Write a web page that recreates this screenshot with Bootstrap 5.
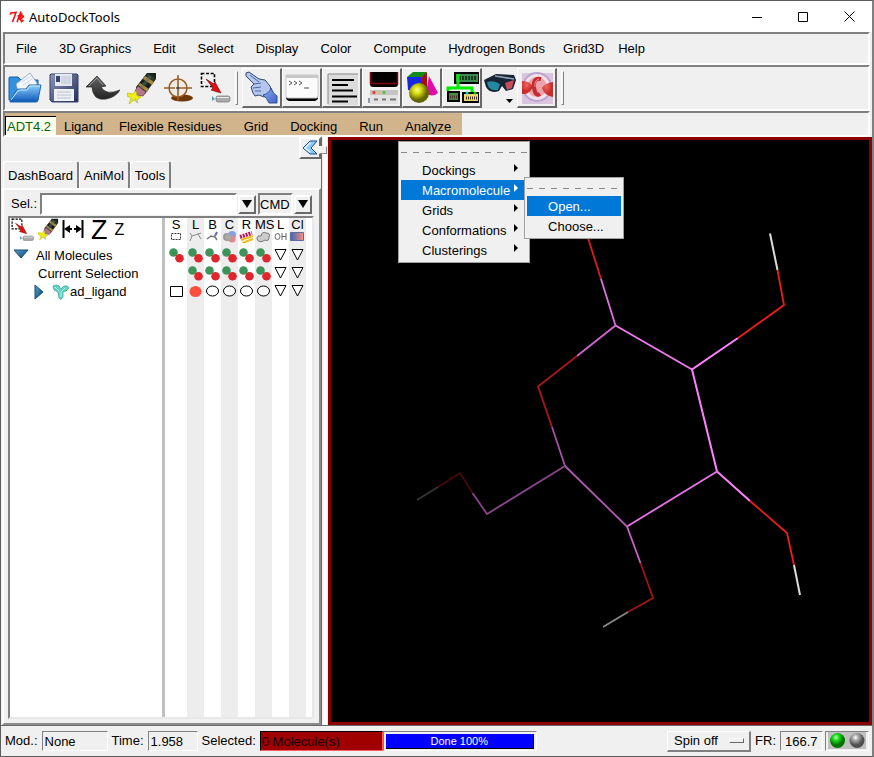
<!DOCTYPE html>
<html lang="en">
<head>
<meta charset="utf-8">
<meta name="viewport" content="width=device-width, initial-scale=1">
<title>AutoDockTools</title>
<link rel="stylesheet" href="https://cdn.jsdelivr.net/npm/bootstrap@5.3.0/dist/css/bootstrap.min.css">
<style>
  body { font: 13px/16px "Liberation Sans", Arial, sans-serif; color: #000; background: #f0f0f0; }
  button, input, select { font: inherit; color: inherit; }
  button { background: none; border: 0; padding: 0; }
  svg { display: block; flex: none; }
  .app { border: 1px solid #5c5c5c; border-right: 2px solid #808080; overflow: hidden; }
  .titlebar { height: 31px; background: #fff; padding-left: 8px; }
  .titlebar h1 { font: 13px/16px "Noto Sans", "Open Sans", sans-serif; }
  .titlebar button { width: 46px; height: 30px; display: flex; align-items: center; justify-content: center; }
  .strip { border: 2px solid; border-color: #808080 #fff #fff #808080; margin: 0 2px; }
  .menubar { height: 33px; }
  .menubar button { padding: 0 11px; white-space: nowrap; }
  .menubar .tight { padding: 0 7px; }
  .toolbar { height: 46px; }
  .toolbar button { display: flex; align-items: center; justify-content: center; width: 39px; height: 40px; }
  .toolbar .narrow { width: 35px; }
  .raised { border: 2px solid; border-color: #fff #696969 #696969 #fff; background: #f0f0f0; }
  .toolbar .raised { width: 40px; border-width: 1px 2px 2px 1px; }
  .grip { width: 3px; height: 34px; border: 1px solid; border-color: #fff #808080 #808080 #fff; }
  .modes { height: 26px; }
  .tanbar { background: #d2b48c; }
  .tanbar button { padding: 6px 11px 0; height: 22px; white-space: nowrap; }
  .tanbar .mode-now { padding: 2px 1px 0; width: 51px; height: 19px; margin: 3px 0 0; text-align: left; background: #fffff0; color: #006400; border-top: 1px solid #000; border-left: 1px solid #000; }
  .popmenu { position: absolute; z-index: 5; background: #f0f0f0; border: 1px solid #a0a0a0; padding: 2px; }
  .popmenu hr { margin: 8px 0 7px; opacity: 1; border: 0; height: 1px; background: repeating-linear-gradient(90deg, #888 0 6px, transparent 6px 12px); }
  .popmenu button { display: flex; justify-content: space-between; width: 100%; height: 20px; align-items: center; padding: 1px 9px 0 21px; }
  .popmenu button svg { margin-bottom: 6px; }
  .popmenu .hot { background: #0078d7; color: #fff; }
  .menu-main { width: 132px; left: 4px; top: 28px; }
  .menu-sub { width: 100px; left: 125px; top: 35px; }
  .lower { min-height: 0; }
  .side { width: 327px; flex: none; background: linear-gradient(90deg, transparent 320px, #696969 320px 321px, #f0f0f0 321px 322px, #fff 322px 326px, #f0f0f0 326px); }
  .side-top { height: 24px; padding-right: 2px; }
  .side-inner { margin-right: 7px; }
  .collapse-btn { width: 22px; height: 22px; margin-right: 5px; }
  .sash { position: absolute; right: 1px; top: 9px; width: 8px; height: 8px; background: #f0f0f0; border: 1px solid; border-color: #fff #888 #888 #fff; }
  .pagetabs { padding-left: 2px; }
  .pagetabs button { height: 27px; padding: 2px 4px 0; border: 1px solid #fff; border-right: 2px solid #808080; border-bottom: 0; border-radius: 3px 3px 0 0; }
  .page { border: 2px solid; border-color: #fff #8c8c8c #8c8c8c #fff; padding: 3px 5px 4px 4px; margin-left: 1px; }
  .sunk { border: 2px solid; border-color: #808080 #fff #fff #808080; background: #fff; border-radius: 0; padding: 0 2px; min-width: 0; }
  .selrow { height: 22px; margin-bottom: 1px; }
  .selrow label { padding: 0 3px; }
  .selrow input { height: 22px; }
  .selrow .cmdbox { width: 35px; background: #f0f0f0; padding: 0; }
  .arrowbtn { width: 18px; height: 19px; display: flex; align-items: center; justify-content: center; margin: 0 2px 0 1px; flex: none; }
  .tree { border: 2px solid; border-color: #808080 #e8e8e8 #e8e8e8 #808080; background: #fff; }
  .treecol { border-right: 3px solid #c0c0c0; min-width: 0; }
  .treehead { height: 29px; padding-left: 1px; align-items: flex-start; }
  .bigz { font-size: 27px; line-height: 24px; }
  .smallz { font-size: 16px; line-height: 24px; }
  .treerow { height: 18px; white-space: nowrap; }
  .flags { width: 147px; flex: none; background: repeating-linear-gradient(90deg, #ededed 0 17px, #fff 17px 34px) 22px 0 / 119px 100% no-repeat; }
  .flags table { table-layout: fixed; width: 141px; border-collapse: collapse; }
  .flags th, .flags td { padding: 0; text-align: center; font-weight: 400; height: 18px; vertical-align: middle; }
  .flags th { height: 28px; line-height: 13px; vertical-align: top; white-space: nowrap; }
  .flags th div { display: flex; justify-content: center; height: 13px; }
  .flags svg { margin: 0 auto; }
  .c-first { width: 22px; }
  .viewer { border: 3px solid #8b0000; background: #000; min-width: 0; }
  .status { height: 31px; border-top: 1px solid #696969; padding: 1px 3px 1px 4px; white-space: nowrap; }
  .status .sunk { background: #f0f0f0; height: 20px; border-width: 1px; padding: 0 2px; }
  .status .f-mod { width: 66px; } .status .f-time { width: 50px; } .status .f-fr { width: 43px; }
  .status .f-sel { width: 123px; background: #a00000; border-color: #000 #ff6060 #ff6060 #000; color: #100; padding: 0 1px; }
  .status .donebar { width: 154px; padding: 2px; }
  .donefill { background: #00f; color: #fff; font-size: 11px; line-height: 14px; height: 15px; border-right: 1px solid #000; border-bottom: 1px solid #000; }
  .spin { height: 21px; width: 84px; border-width: 1px 2px 2px 1px; padding-left: 6px; border-color: #fff #808080 #808080 #fff; }
  .spin select { appearance: none; border: 0; background: none; width: 55px; padding: 0; outline: 0; }
  .spinmark { width: 15px; height: 5px; border: 1px solid; border-color: #fff #696969 #696969 #fff; }
  .leds { background: #c0c0c0; }
  .ledbox { margin-left: 2px; }
  .g-small { gap: 3px; }
  .g-status { gap: 4px; }
</style>
</head>
<body>
<svg width="0" height="0" class="position-absolute" aria-hidden="true">
  <defs>
    <linearGradient id="blueFace" x2="0" y2="1"><stop stop-color="#8fd0fb"/><stop offset="1" stop-color="#0a56ba"/></linearGradient>
    <linearGradient id="steel" x2="1" y2="1"><stop stop-color="#8d98bb"/><stop offset="1" stop-color="#242c54"/></linearGradient>
    <linearGradient id="dark" x2="0" y2="1"><stop stop-color="#666"/><stop offset="1" stop-color="#222"/></linearGradient>
    <linearGradient id="triFill" x2="1" y2="1"><stop stop-color="#4fa0cc"/><stop offset="1" stop-color="#124670"/></linearGradient>
    <linearGradient id="cl" x2="1"><stop stop-color="#3569bd"/><stop offset="1" stop-color="#ff8d77"/></linearGradient>
    <linearGradient id="cuff" x2="1" y2="1"><stop stop-color="#8fb0f8"/><stop offset="1" stop-color="#3c62c4"/></linearGradient>
    <radialGradient id="yel" cx=".4" cy=".35"><stop stop-color="#ffff80"/><stop offset=".4" stop-color="#d8dc10"/><stop offset="1" stop-color="#626600"/></radialGradient>
    <radialGradient id="ledg" cx=".4" cy=".3"><stop stop-color="#b8ffb0"/><stop offset=".4" stop-color="#20e020"/><stop offset="1" stop-color="#007000"/></radialGradient>
    <radialGradient id="ledx" cx=".4" cy=".3"><stop stop-color="#fff"/><stop offset=".4" stop-color="#aaa"/><stop offset="1" stop-color="#505050"/></radialGradient>
    <radialGradient id="redb" cx=".4" cy=".3"><stop stop-color="#f0685e"/><stop offset="1" stop-color="#c92a2c"/></radialGradient>
  </defs>
  <symbol id="pencil" viewBox="0 0 30 32">
    <path d="M20 1h9v6L18 22l-8-3-1-4z" fill="#18201c"/>
    <path d="M20 1l9 5-4 6-8-5z" fill="#29362d"/><path d="M18 4l9 6-2 3-9-6zM13 11l9 6-2 3-9-7z" fill="#a98a3e"/>
    <path d="M22 3l3 2-11 14-3-2z" fill="#587064" opacity=".5"/>
    <path d="M11 14l8 6-3 4-6-1-2-4z" fill="#b4788a" stroke="#613943" stroke-width=".7"/>
    <path d="M0 21l6 1 3-3 1 5 4 1-4 3 1 3-4-3-5 4 2-6-4-2z" fill="#eeee10" stroke="#c0bc00" stroke-width=".7"/>
    <path d="M8 26l2 5M4 26l2 3" stroke="#bbb"/>
  </symbol>
  <symbol id="pick" viewBox="0 0 32 32">
    <path d="M1.500 1.500h13v13h-13z" fill="none" stroke="#000" stroke-width="1.600" stroke-dasharray="3 1.600"/>
    <path d="M6 7l8 5 1-2 6 11-10-3 2-2z" fill="#e01010" stroke="#700" stroke-width=".6"/>
    <rect x="16" y="24" width="14" height="6" rx="2" fill="#aaa" stroke="#777" stroke-width=".7"/><path d="M17 25.500h12" stroke="#eee"/><path d="M12 24l3 3-3 2z" fill="#5d9eae"/>
  </symbol>
  <symbol id="pair" viewBox="0 0 15 15"><circle cx="4.500" cy="4.500" r="4.300" fill="#3c9458"/><circle cx="10.500" cy="10.200" r="4.300" fill="#e0252c"/></symbol>
  <symbol id="tri" viewBox="0 0 15 14"><path d="M2 1.500h11L7.500 12z" fill="#fff" stroke="#000"/></symbol>
  <symbol id="oval" viewBox="0 0 15 12"><ellipse cx="7.500" cy="6" rx="6" ry="5" fill="#fff" stroke="#000"/></symbol>
  <symbol id="more" viewBox="0 0 4 8"><path d="M0 0l4 4-4 4z" fill="currentColor"/></symbol>
</svg>

<div class="app d-flex flex-column vh-100">
  <header class="titlebar d-flex align-items-center">
    <svg width="16" height="12" viewBox="0 0 16 12" fill="none" stroke="#f01010" stroke-width="1.600"><path d="M1 3.500L2 2l5-.5L3.500 11"/><path d="M12 .5L8 11M8.500 5q2.500 0 5-2.500M9.500 7q3-3 4.500-2t-4 3q2 0 2.500 2.500l2-1.500"/></svg>
    <h1 class="m-0 ms-1 flex-fill text-truncate">AutoDockTools</h1>
    <button type="button" aria-label="Minimize"><svg width="10" height="10"><path d="M0 5.500h10" stroke="#000"/></svg></button>
    <button type="button" aria-label="Maximize"><svg width="10" height="10"><path d="M.5.500h9v9h-9z" fill="none" stroke="#000"/></svg></button>
    <button type="button" aria-label="Close"><svg width="11" height="11"><path d="M.5.500l10 10m0-10l-10 10" stroke="#000"/></svg></button>
  </header>

  <nav class="strip menubar d-flex align-items-stretch">
    <button type="button">File</button><button type="button">3D Graphics</button><button type="button">Edit</button><button type="button">Select</button><button type="button">Display</button><button type="button">Color</button><button type="button">Compute</button><button type="button">Hydrogen Bonds</button><button type="button" class="tight">Grid3D</button><button type="button" class="tight">Help</button>
  </nav>

  <div class="strip toolbar d-flex align-items-center">
    <button type="button" aria-label="Open"><svg width="34" height="32" viewBox="0 0 34 32">
      <path d="M1 6q0-1 1-1h8l3 3h17v20H1z" fill="#348fdd" stroke="#1460a8"/><path d="M8 12L22 1l7 10v8H10z" fill="#f3f6ff" stroke="#8b99b5" stroke-width=".8"/><path d="M14 10l9-6M15 13l9-6" stroke="#ced6e8"/>
      <path d="M2 29L8 19q1-2 3-2h7l3-4h12l-3 15q0 2-2 2H2z" fill="url(#blueFace)" stroke="#1e69b1"/><path d="M3 28l6-8q1-2 3-2h7l3-4h10" fill="none" stroke="#c8eaff"/></svg></button>
    <button type="button" aria-label="Save"><svg width="30" height="30" viewBox="0 0 30 30">
      <path d="M1 2l1-1h26l1 1v27H3l-2-2z" fill="url(#steel)" stroke="#35406c"/><path d="M6 1h17v12H6z" fill="#e3e8f1"/><path d="M7 3h4v6H7z" fill="#37436f"/><path d="M12 3h10v8H12z" fill="#cfd7e5"/><path d="M5 16h20v12H5z" fill="#eff1f6"/><path d="M8 19h14M8 22h14M8 25h14" stroke="#b7bdc9"/></svg></button>
    <button type="button" aria-label="Undo"><svg width="34" height="26" viewBox="0 0 34 26">
      <path d="M0 12L11 1l9 10-5 1q5 9 19 3-4 7-14 9-13 2-14-12z" fill="url(#dark)" stroke="#333" stroke-width=".8"/><path d="M3 11l8-8 6 7" stroke="#999" fill="none"/></svg></button>
    <button type="button" aria-label="Erase"><svg width="30" height="32"><use href="#pencil"/></svg></button>
    <button type="button" aria-label="Center" class="narrow"><svg width="30" height="30" viewBox="0 0 30 30" fill="none" stroke="#995d28">
      <ellipse cx="18" cy="25" rx="11" ry="3.500" fill="#6f3606" stroke="none"/><circle cx="14" cy="15" r="9" fill="#f0ece4" stroke-width="1.500"/><path d="M14 2v11m0 4v11M0 15h11m5 0h12" stroke-width="1.600"/><path d="M12 15h4m-2-2v4" stroke="#111"/></svg></button>
    <button type="button" aria-label="Selection"><svg width="32" height="32"><use href="#pick"/></svg></button>
    <span class="grip me-1"></span>
    <button type="button" class="raised" aria-label="Pointer"><svg width="34" height="34" viewBox="0 0 34 34">
      <path d="M1 2l3-1 10 7 6 1 5 6 2 6-8 5-5-2-4 1-2-3-1-3-1-3 3-3L1 5z" fill="#b4c6ee" stroke="#34466f"/><path d="M18 24q6-1 8-7 2 6 6 8v7h-8q-2-5-6-8z" fill="url(#cuff)" stroke="#314f94"/><path d="M9 13l7-1M8 17l8-1M10 20l6 0M5 4l9 7" stroke="#4f68a0" fill="none"/></svg></button>
    <button type="button" class="raised" aria-label="Python shell"><svg width="34" height="34" viewBox="0 0 34 34">
      <path d="M1 23h32v4q0 2-3 3H4q-3-1-3-3z" fill="#000"/><path d="M1 4h32v21q0 2-2 2H3q-2 0-2-2z" fill="#fcfcfc" stroke="#ccc"/><path d="M1 4h32v3H1z" fill="#c8c8c8"/><path d="M4 10l3 2-3 2m5-4l3 2-3 2m5-4l3 2-3 2m5 3h5" fill="none" stroke="#555"/></svg></button>
    <button type="button" class="raised" aria-label="Log"><svg width="34" height="34" viewBox="0 0 34 34">
      <path d="M3 3h30v31H3z" fill="#dcdcdc"/><path d="M3 33V3h30" stroke="#888" fill="none"/><path d="M7 9h22M7 14h16M7 19.500h21M7 25.500h25M7 30.500h16" stroke="#000" stroke-width="2"/></svg></button>
    <button type="button" class="raised" aria-label="Viewer windows"><svg width="34" height="34" viewBox="0 0 34 34">
      <path d="M5 1h28v12q0 3-3 3H8q-3 0-3-3z" fill="#000"/><path d="M5.500 1v11.500h27V1" fill="none" stroke="#880010" stroke-width="1.500"/><path d="M5 19h28v14H5z" fill="#e2e2e2"/><path d="M5 19h28v5H5z" fill="#c4c4c4"/><circle cx="9" cy="21.500" r="1.700" fill="#e44"/><circle cx="14" cy="21.500" r="1.700" fill="#db7"/><circle cx="19" cy="21.500" r="1.700" fill="#6b4"/><path d="M9 28.500h4m4 0h4m4 0h6" stroke="#777" stroke-width="2"/><path d="M4 27v5" stroke="#246"/></svg></button>
    <button type="button" class="raised" aria-label="Shapes"><svg width="34" height="34" viewBox="0 0 34 34">
      <path d="M2 6l6-5h14l-4 6z" fill="#138b1c"/><path d="M2 6h14v16l-13-3z" fill="#1728e0"/><path d="M16 7l6-6v15l-6 6z" fill="#a90b10"/><path d="M24 5l9 17q-6 5-12 0z" fill="#df0ba8"/><circle cx="14" cy="22" r="10" fill="url(#yel)"/></svg></button>
    <button type="button" class="raised" aria-label="Network"><svg width="34" height="34" viewBox="0 0 34 34">
      <path d="M10 2h24v10H10z" fill="#3d8a50" stroke="#000" stroke-width="2"/><path d="M14 7h18" stroke="#163a1c" stroke-width="4" stroke-dasharray="2 1"/><path d="M13 3v14M3 20v-3h24v5" fill="none" stroke="#0e0" stroke-width="3"/><path d="M3 21h11v9H3z" fill="#488a4b" stroke="#000" stroke-width="2"/><path d="M18 22h16v9H18z" fill="#ebd872" stroke="#000" stroke-width="2"/><path d="M5 26h8m8 1h11" stroke="#432" stroke-width="3" stroke-dasharray="1 1"/><circle cx="22" cy="22" r="1.500" fill="#0cc"/><circle cx="30" cy="22" r="1.500" fill="#0c0"/></svg></button>
    <button type="button" aria-label="Stereo" class="narrow"><svg width="34" height="34" viewBox="0 0 34 34">
      <path d="M1 9L13 3l18 1 2 5-3 9-7 2-4-5-3 5q-9 3-13-4z" fill="#182334"/><path d="M12 5l19 3" stroke="#8fa0ba" stroke-width="1.500"/><path d="M4 11q7-2 13 2l-2 6q-8 1-10-4z" fill="#24889e"/><path d="M22 12l9-3-2 8-5 2z" fill="#c84b5b"/><path d="M23 28h7l-3.500 4z" fill="#000"/></svg></button>
    <button type="button" class="raised" aria-label="Volume"><svg width="34" height="34" viewBox="0 0 34 34">
      <path d="M2 2h31v31H2z" fill="#d9c6de"/><circle cx="17" cy="16" r="14" fill="#f2dfe8" stroke="#bba2d0" stroke-width="2"/><circle cx="17" cy="16" r="10" fill="#eaa3aa"/><path d="M2 10q8 0 11 6-4 8-11 7z" fill="url(#redb)"/><path d="M33 11q-8 1-11 6 3 8 11 9z" fill="url(#redb)"/><path d="M21 8q-8-2-7 8t6 7" fill="none" stroke="#c42832" stroke-width="4"/><path d="M19 8q-5 1-4 8" fill="none" stroke="#ff8b80"/></svg></button>
    <span class="grip ms-1"></span>
  </div>

  <div class="strip modes d-flex">
    <div class="tanbar d-flex">
      <button type="button" class="mode-now">ADT4.2</button>
      <button type="button" class="px-2">Ligand</button><button type="button" class="ps-2">Flexible Residues</button><button type="button">Grid</button><button type="button">Docking</button><button type="button">Run</button>
      <div class="position-relative">
        <button type="button">Analyze</button>
        <div class="popmenu menu-main">
          <hr>
          <button type="button">Dockings<svg width="4" height="8"><use href="#more"/></svg></button>
          <button type="button" class="hot">Macromolecule<svg width="4" height="8"><use href="#more"/></svg></button>
          <button type="button">Grids<svg width="4" height="8"><use href="#more"/></svg></button>
          <button type="button">Conformations<svg width="4" height="8"><use href="#more"/></svg></button>
          <button type="button">Clusterings<svg width="4" height="8"><use href="#more"/></svg></button>
          <div class="popmenu menu-sub">
            <hr>
            <button type="button" class="hot">Open...</button>
            <button type="button">Choose...</button>
          </div>
        </div>
      </div>
    </div>
  </div>

  <main class="lower d-flex flex-fill">
    <section class="side d-flex flex-column">
      <div class="side-top position-relative d-flex justify-content-end">
        <button type="button" class="raised collapse-btn d-flex align-items-center justify-content-center" aria-label="Collapse panel"><svg width="14" height="16" viewBox="0 0 14 16"><path d="M7 1h7L8 8l6 6H7L0 8z" fill="#8ccaf8" stroke="#1c4f89"/><path d="M7.500 2.500L2 8l5 4" fill="none" stroke="#e5f6ff" stroke-width="1.500"/></svg></button>
        <span class="sash"></span>
      </div>
      <div class="side-inner d-flex flex-column flex-fill">
        <div class="pagetabs d-flex">
          <button type="button">DashBoard</button><button type="button">AniMol</button><button type="button">Tools</button>
        </div>
        <div class="page d-flex flex-column flex-fill">
          <div class="selrow d-flex align-items-center">
            <label for="sel">Sel.:</label>
            <input id="sel" type="text" class="sunk flex-fill">
            <button type="button" class="raised arrowbtn" aria-label="Selection history"><svg width="10" height="8"><path d="M0 0h10L5 8z"/></svg></button>
            <input type="text" class="sunk cmdbox" value="CMD" aria-label="Mode">
            <button type="button" class="raised arrowbtn" aria-label="Choose mode"><svg width="10" height="8"><path d="M0 0h10L5 8z"/></svg></button>
          </div>
          <div class="tree d-flex flex-fill">
            <div class="treecol flex-fill">
              <div class="treehead d-flex g-small">
                <button type="button" aria-label="Pick"><svg width="24" height="24"><use href="#pick"/></svg></button>
                <button type="button" aria-label="Clear"><svg width="21" height="22"><use href="#pencil"/></svg></button>
                <button type="button" aria-label="Expand"><svg width="22" height="20" viewBox="0 0 22 20"><path d="M1.500 2v18M20.500 2v18" stroke="#000" stroke-width="2"/><path d="M2 11l6-4v3h2v2H8v3zM20 11l-6-4v3h-2v2h2v3z"/></svg></button>
                <button type="button" class="bigz ps-1 pe-1">Z</button>
                <button type="button" class="smallz">Z</button>
              </div>
              <div class="treerow d-flex align-items-center"><svg width="14" height="10" viewBox="0 0 14 10" class="ms-1 mb-1"><path d="M0 1h14L7 9z" fill="url(#triFill)" stroke="#174d74"/></svg><span class="ms-2">All Molecules</span></div>
              <div class="treerow d-flex align-items-center ps-4"><span class="ps-1">Current Selection</span></div>
              <div class="treerow d-flex align-items-center ps-4"><svg width="10" height="14" viewBox="0 0 10 14"><path d="M1 0v14l8-7z" fill="url(#triFill)" stroke="#174d74"/></svg><svg width="18" height="16" viewBox="0 0 18 16" class="ms-2"><path d="M1 2q3-2 6 0l2 3 3-3q4-1 5 2l-3 3-3 1v5q-2 4-4 1l-1-6-4-2z" fill="#66d2c3" stroke="#3fae9e" stroke-width=".8"/><path d="M3 3l4 4m6-3l-4 4v5" stroke="#b5fff4" fill="none"/></svg><span>ad_ligand</span></div>
            </div>
            <div class="flags">
              <table>
                <colgroup><col class="c-first"><col><col><col><col><col><col><col></colgroup>
                <thead><tr>
                  <th>S<div><svg width="12" height="12"><path d="M1.500 2.500h9v6h-9z" fill="none" stroke="#333" stroke-dasharray="2 1"/></svg></div></th>
                  <th>L<div><svg width="13" height="12"><path d="M1 10l2-5 6-2 3 5M3 5L1 2M9 3l3-1" fill="none" stroke="#888"/></svg></div></th>
                  <th>B<div><svg width="13" height="12"><path d="M1 8l4-3 4 1 2 3" fill="none" stroke="#777" stroke-width="1.500"/><path d="M9 5l2-4" stroke="#66b" stroke-width="2"/></svg></div></th>
                  <th>C<div><svg width="15" height="12"><circle cx="5" cy="6" r="4" fill="#999"/><circle cx="10" cy="4" r="4" fill="#88a0e4"/><circle cx="10" cy="8" r="3.500" fill="#dc8989"/><circle cx="6" cy="6" r="3" fill="#aaa"/></svg></div></th>
                  <th>R<div><svg width="15" height="12"><path d="M1 6l12-4" stroke="#c01060" stroke-width="4" stroke-dasharray="2 1"/><path d="M2 9l12-4M3 12l11-4" stroke="#edbd20" stroke-width="2"/></svg></div></th>
                  <th>MS<div><svg width="15" height="12"><path d="M1 8q0-4 4-3 1-5 5-3 5 0 3 4 0 5-4 3-6 4-8-1z" fill="#ccc" stroke="#777"/></svg></div></th>
                  <th>L<div><svg width="13" height="12" viewBox="0 0 13 12" fill="none" stroke="#666"><ellipse cx="3.500" cy="5.500" rx="2.500" ry="3"/><path d="M8 2v7m4-7v7m-4-3.500h4"/></svg></div></th>
                  <th>Cl<div><svg width="15" height="12"><path d="M.5 1.500h13v8H.5z" fill="url(#cl)" stroke="#5d6ba1"/></svg></div></th>
                </tr></thead>
                <tbody>
                  <tr><td><svg width="15" height="15"><use href="#pair"/></svg></td><td><svg width="15" height="15"><use href="#pair"/></svg></td><td><svg width="15" height="15"><use href="#pair"/></svg></td><td><svg width="15" height="15"><use href="#pair"/></svg></td><td><svg width="15" height="15"><use href="#pair"/></svg></td><td><svg width="15" height="15"><use href="#pair"/></svg></td><td><svg width="15" height="14"><use href="#tri"/></svg></td><td><svg width="15" height="14"><use href="#tri"/></svg></td></tr>
                  <tr><td></td><td><svg width="15" height="15"><use href="#pair"/></svg></td><td><svg width="15" height="15"><use href="#pair"/></svg></td><td><svg width="15" height="15"><use href="#pair"/></svg></td><td><svg width="15" height="15"><use href="#pair"/></svg></td><td><svg width="15" height="15"><use href="#pair"/></svg></td><td><svg width="15" height="14"><use href="#tri"/></svg></td><td><svg width="15" height="14"><use href="#tri"/></svg></td></tr>
                  <tr><td><svg width="13" height="11"><path d="M.5.500h12v10H.5z" fill="#fff" stroke="#000"/></svg></td><td><svg width="13" height="11"><ellipse cx="6.500" cy="5.500" rx="6" ry="5.500" fill="#ff4e3e"/></svg></td><td><svg width="15" height="12"><use href="#oval"/></svg></td><td><svg width="15" height="12"><use href="#oval"/></svg></td><td><svg width="15" height="12"><use href="#oval"/></svg></td><td><svg width="15" height="12"><use href="#oval"/></svg></td><td><svg width="15" height="14"><use href="#tri"/></svg></td><td><svg width="15" height="14"><use href="#tri"/></svg></td></tr>
                </tbody>
              </table>
            </div>
          </div>
        </div>
      </div>
    </section>

    <section class="viewer flex-fill" aria-label="3D molecule viewer">
      <svg class="w-100 h-100" viewBox="331 140 538 582" preserveAspectRatio="xMidYMid meet" fill="none" stroke-width="1.800">
        <path d="M588 238L601 279" stroke="#e01b1b"/><path d="M601 279L615.500 325.500" stroke="#e070e0"/>
        <path d="M615.500 325.500L577 356" stroke="#cf68cf"/><path d="M577 356L538 386.500L552 427" stroke="#ac1818"/>
        <path d="M552 427L565 466" stroke="#a552a5"/><path d="M615.500 325.500L692 369.500" stroke="#f07af0"/>
        <path d="M738 338L692 369.500L717 471.500L750 501" stroke="#ff80ff" stroke-width="2"/><path d="M738 338L784 305L777.500 270" stroke="#f01c1c"/><path d="M777.500 270L770 233.500" stroke="#ddd" stroke-width="2"/>
        <path d="M750 501L787 533L794 565" stroke="#f01c1c"/><path d="M794 565L800 595" stroke="#ddd" stroke-width="2"/>
        <path d="M717 471.500L627 526.500" stroke="#e873e8"/><path d="M565 466L627 526.500" stroke="#b158b1"/>
        <path d="M627 526.500L640.500 563" stroke="#c963c9"/><path d="M640.500 563L653 598L628 612" stroke="#9e1616"/><path d="M628 612L603 627" stroke="#888"/>
        <path d="M565 466L487 514L472.500 493" stroke="#894489"/><path d="M472.500 493L460 473L438 487" stroke="#450909"/><path d="M438 487L417 500" stroke="#353535"/>
      </svg>
    </section>
  </main>

  <footer class="status d-flex align-items-center">
    <div class="d-flex align-items-center g-status">
      <label for="mod">Mod.:</label><input id="mod" class="sunk f-mod" value="None" readonly>
      <label for="time">Time:</label><input id="time" class="sunk f-time" value="1.958" readonly>
      <label for="picked">Selected:</label><input id="picked" class="sunk f-sel" value="0 Molecule(s)" readonly>
    </div>
    <div class="sunk donebar"><div class="donefill text-center">Done 100%</div></div>
    <div class="d-flex align-items-center ms-auto">
      <div class="raised spin d-flex align-items-center"><select aria-label="Spin"><option>Spin off</option></select><span class="spinmark"></span></div>
      <label for="fr" class="px-1">FR:</label><input id="fr" class="sunk f-fr ps-1" value="166.7" readonly>
      <div class="sunk ledbox"><svg class="leds" width="38" height="17"><circle cx="9.500" cy="8.500" r="7.500" fill="url(#ledg)"/><circle cx="29" cy="8.500" r="7.500" fill="url(#ledx)"/></svg></div>
    </div>
  </footer>
</div>
<script src="https://cdn.jsdelivr.net/npm/bootstrap@5.3.0/dist/js/bootstrap.bundle.min.js"></script>
</body>
</html>
